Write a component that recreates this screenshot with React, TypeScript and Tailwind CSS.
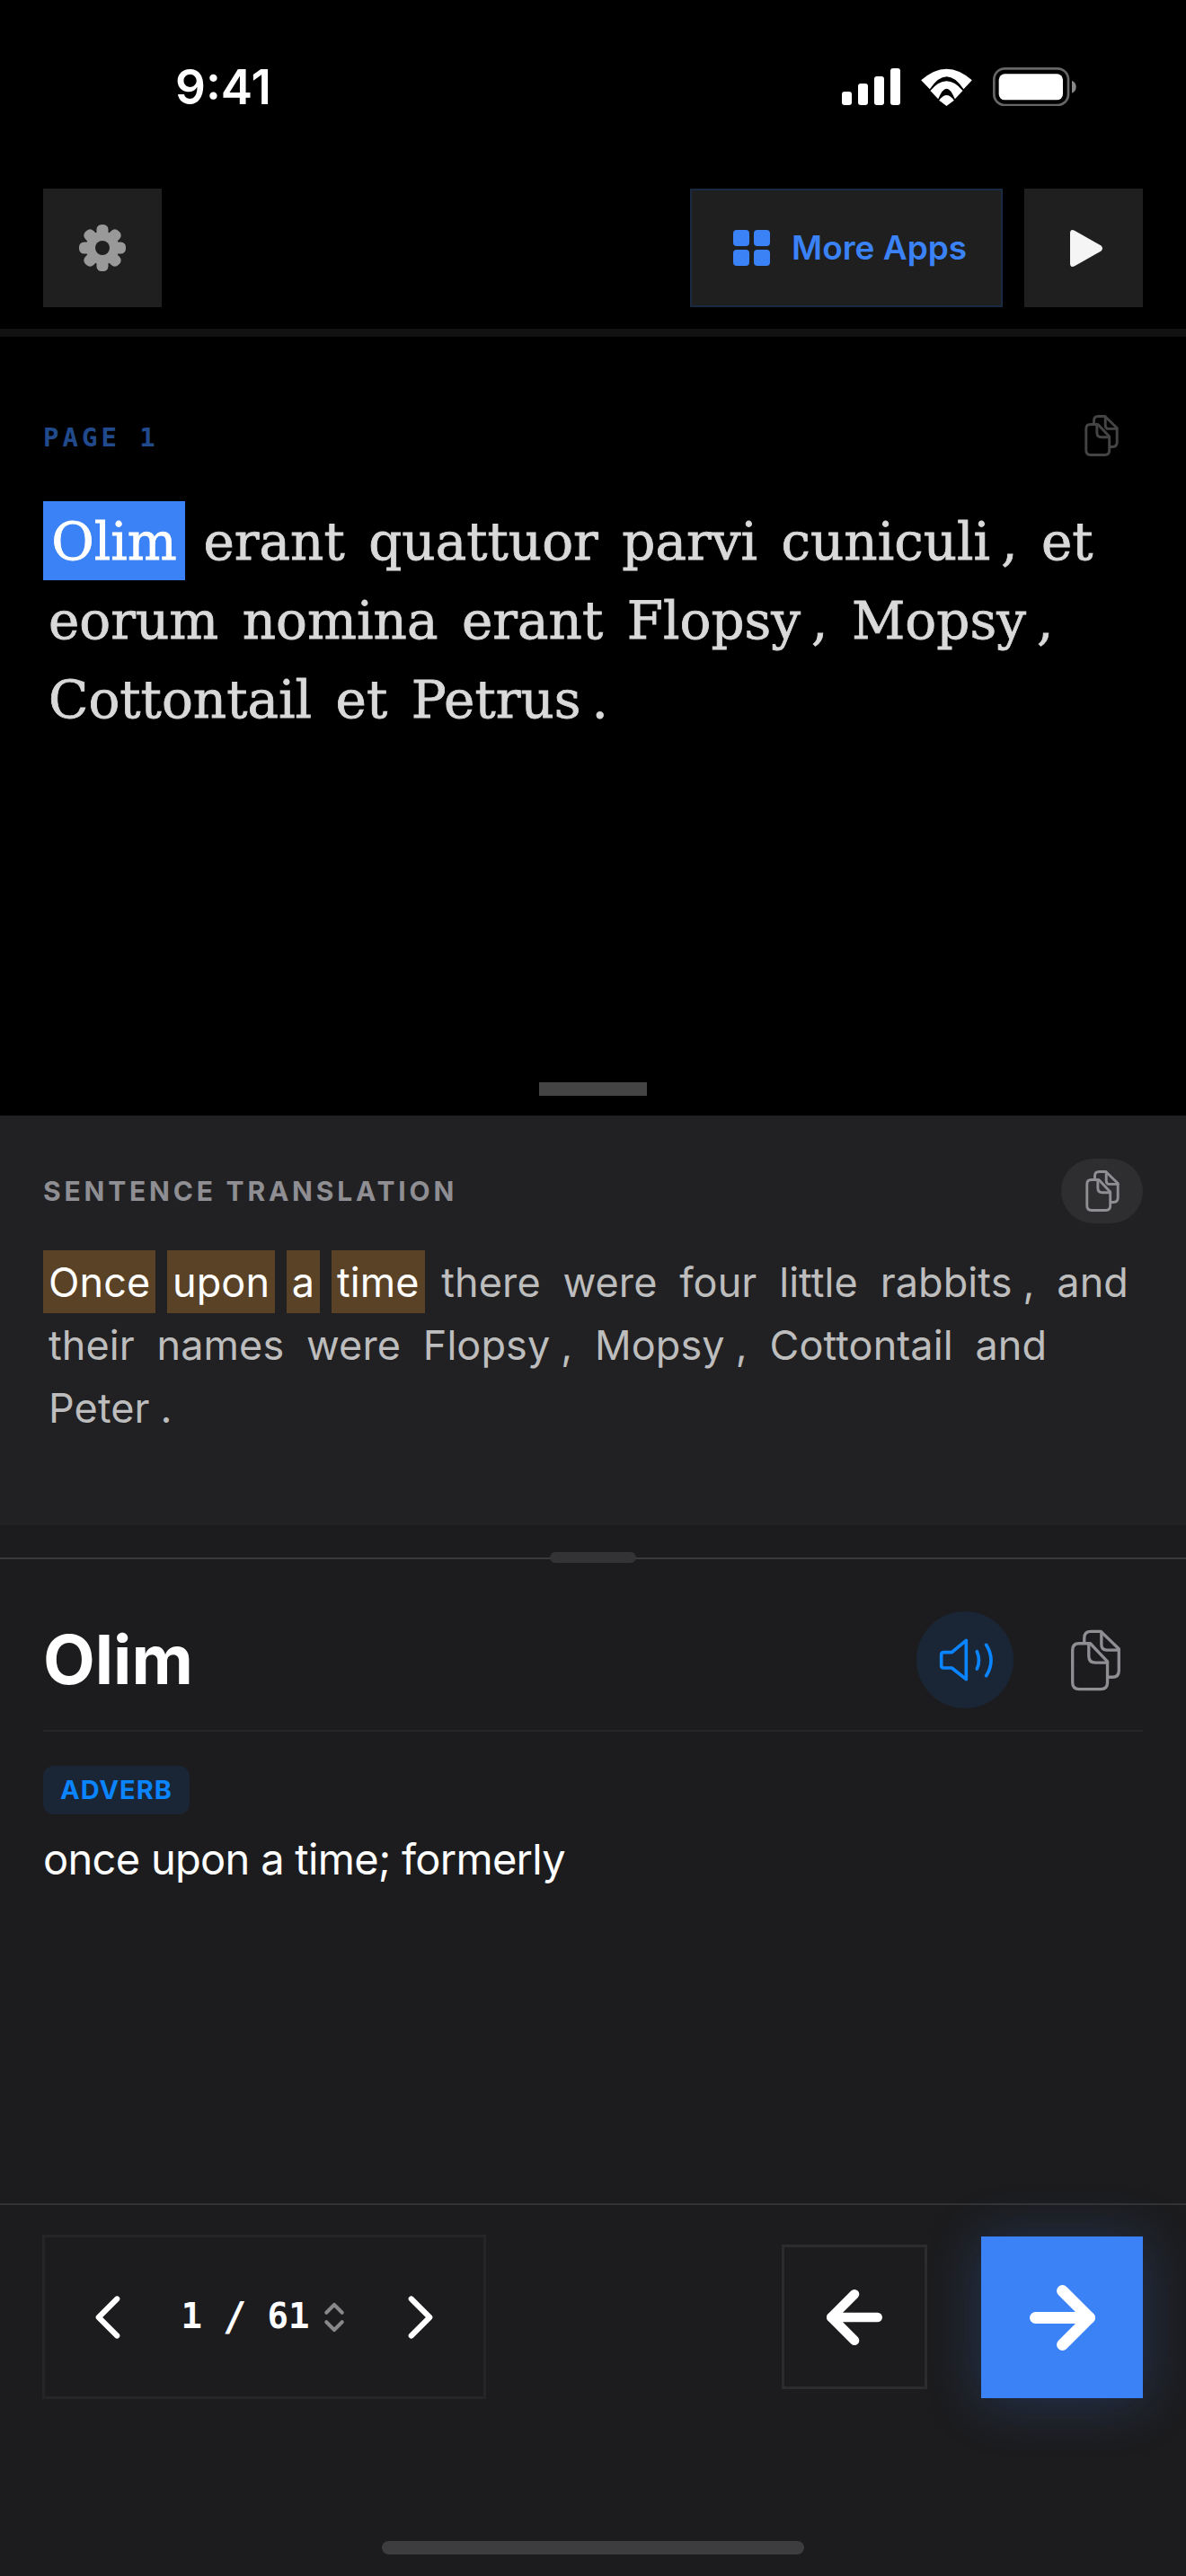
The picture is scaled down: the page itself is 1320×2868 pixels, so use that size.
import { ArrowLeft, ArrowRight, ChevronLeft, ChevronRight, ChevronsUpDown } from "lucide-react";

// ── Icons ──────────────────────────────────────────────────────────

function CopyIcon({ className, strokeWidth = 10 }: { className?: string; strokeWidth?: number }) {
  return (
    <svg className={className} viewBox="628 163 170 206" fill="none" stroke="currentColor" strokeWidth={strokeWidth} strokeLinecap="round" strokeLinejoin="round">
      <path d="M675 208V192Q675 170 697 170H730L790 228V300Q790 322 768 322H755" />
      <path d="M732 172V214Q732 232 750 232H790" />
      <path d="M658 210H695L752 270V340Q752 362 730 362H658Q636 362 636 340V232Q636 210 658 210Z" />
      <path d="M690 212V252Q690 274 712 274H750" />
    </svg>
  );
}

function SignalIcon() {
  return (
    <svg className="w-[65px] h-[41px]" viewBox="0 0 65 41" fill="#fff">
      <rect x="0" y="26" width="11" height="15" rx="3" />
      <rect x="18" y="17" width="11" height="24" rx="3" />
      <rect x="36" y="9" width="11" height="32" rx="3" />
      <rect x="54" y="0" width="11" height="41" rx="3" />
    </svg>
  );
}

function WifiIcon() {
  return (
    <svg className="w-[57px] h-[42px]" viewBox="435 75 170 126" fill="#fff">
      <path d="M435 115Q520 39 605 115L577 145Q520 61 464 145Z" />
      <path d="M466 150Q520 86 574 150L548 178Q520 108 492 178Z" />
      <path d="M495 182Q520 148 545 182L520 201Z" />
    </svg>
  );
}

function BatteryIcon() {
  return (
    <svg className="w-[93px] h-[43px]" viewBox="676 74 279 129">
      <rect x="680" y="78" width="248" height="122" rx="36" fill="none" stroke="#666" strokeWidth="8" />
      <rect x="696" y="96" width="214" height="87" rx="20" fill="#fff" />
      <path d="M940 118Q954 124 954 139Q954 154 940 160Z" fill="#888" />
    </svg>
  );
}

function GearIcon() {
  return (
    <svg className="w-[52px] h-[52px]" viewBox="0 0 52 52" fill="#999999">
      <circle cx="26" cy="26" r="18.500" />
      {[0, 45, 90, 135, 180, 225, 270, 315].map((deg) => (
        <rect key={deg} x="19.500" y="0" width="13" height="14" rx="5.500" transform={`rotate(${deg} 26 26)`} />
      ))}
      <circle cx="26" cy="26" r="8" fill="#1f1f1f" />
    </svg>
  );
}

function GridIcon() {
  return (
    <svg className="w-[41px] h-[40px]" viewBox="0 0 41 40" fill="#3b82f6">
      <rect x="0" y="0" width="18" height="18" rx="4" />
      <rect x="23" y="0" width="18" height="18" rx="4" />
      <rect x="0" y="22" width="18" height="18" rx="4" />
      <rect x="23" y="22" width="18" height="18" rx="4" />
    </svg>
  );
}

function PlayIcon() {
  return (
    <svg className="w-[37px] h-[41px]" viewBox="0 0 37 41" fill="#f5f5f5">
      <path d="M0 4Q0 -1.500 5 0.800L34.500 17.500Q37.500 20.500 34.500 23.500L5 40.200Q0 42.500 0 37Z" />
    </svg>
  );
}

function SpeakerIcon() {
  return (
    <svg className="w-[64px] h-[50px] ml-[3px]" viewBox="190 190 190 150" fill="none" stroke="#0a84ff" strokeWidth="11" strokeLinecap="round" strokeLinejoin="round">
      <path d="M208 240H235L283 200V330L235 292H208Q200 292 200 284V248Q200 240 208 240Z" />
      <path d="M319 237Q332 266 319 295" />
      <path d="M350 215Q382 266 350 318" />
    </svg>
  );
}

// ── Text tokens ────────────────────────────────────────────────────

const LATIN = ["Olim", "erant", "quattuor", "parvi", "cuniculi", ",", "et", "eorum", "nomina", "erant", "Flopsy", ",", "Mopsy", ",", "Cottontail", "et", "Petrus", "."];
const ENGLISH = ["Once", "upon", "a", "time", "there", "were", "four", "little", "rabbits", ",", "and", "their", "names", "were", "Flopsy", ",", "Mopsy", ",", "Cottontail", "and", "Peter", "."];

const isPunct = (t: string) => t === "," || t === ".";

export default function App() {
  return (
    <div className="w-[1320px] h-[2868px] flex flex-col bg-black overflow-hidden font-['Inter',sans-serif]">
      {/* Status bar */}
      <div className="h-[210px] shrink-0 flex items-start justify-between pt-[71px] pl-[195px] pr-[122px]">
        <span className="text-[53px] leading-[52px] font-semibold text-white">9:41</span>
        <div className="flex items-center gap-[23px] pt-[4px]">
          <SignalIcon />
          <WifiIcon />
          <BatteryIcon />
        </div>
      </div>

      {/* Toolbar */}
      <div className="h-[132px] shrink-0 flex items-stretch justify-between px-[48px]">
        <button className="w-[132px] flex items-center justify-center bg-[#1f1f1f]">
          <GearIcon />
        </button>
        <div className="flex gap-[24px]">
          <button className="w-[348px] flex items-center gap-[24px] pl-[46px] bg-[#1f1f1f] border-2 border-[#1b2a42]">
            <GridIcon />
            <span className="text-[37px] font-semibold text-[#3b82f6]">More Apps</span>
          </button>
          <button className="w-[132px] flex items-center justify-center bg-[#1f1f1f] pl-[6px]">
            <PlayIcon />
          </button>
        </div>
      </div>
      <div className="h-[9px] mt-[24px] shrink-0 bg-[#111111]" />

      {/* Latin page */}
      <section className="h-[867px] shrink-0 flex flex-col px-[48px]">
        <div className="flex items-center justify-between pt-[87px] h-[133px]">
          <span className="mt-[6px] text-[29px] font-bold tracking-[4px] text-[#214a8c] font-['DejaVu_Sans_Mono',monospace]">PAGE 1</span>
          <CopyIcon className="w-[38px] h-[46px] mr-[27px] text-[#444444]" strokeWidth={13} />
        </div>
        <p className="mt-[50px] text-[58px] leading-[60px] [word-spacing:-4px] text-[#d9d9d9] [-webkit-text-stroke:0.8px] font-['DejaVu_Serif',serif]">
          {LATIN.map((t, i) => (
            <span key={i}>
              {i > 0 && !isPunct(t) ? " " : ""}
              <span className={`inline-block h-[88px] leading-[91px] ${i === 0 ? "w-[158px] text-center bg-[#3b82f6] text-white" : "px-[6px]"}`}>{t}</span>
            </span>
          ))}
        </p>
        <div className="mt-auto mb-[22px] mx-auto w-[120px] h-[15px] bg-[#444444]" />
      </section>

      {/* Sentence translation */}
      <section className="h-[456px] shrink-0 bg-[#212123] px-[48px] pt-[48px]">
        <div className="flex items-center justify-between h-[72px]">
          <span className="text-[30px] font-bold tracking-[3.800px] text-[#8e8e93]">SENTENCE TRANSLATION</span>
          <button className="w-[91px] h-[72px] rounded-full bg-[#2e2e30] flex items-center justify-center">
            <CopyIcon className="w-[38px] h-[46px] text-[#8e8e93]" strokeWidth={13} />
          </button>
        </div>
        <p className="mt-[30px] text-[45px] leading-[50px] tracking-[0.080px] text-[#bdbdbd]">
          {ENGLISH.map((t, i) => (
            <span key={i}>
              {i > 0 && !isPunct(t) ? " " : ""}
              <span className={`inline-block h-[70px] leading-[72px] px-[6px] ${i < 4 ? "bg-[#5a4226] text-white" : ""}`}>{t}</span>
            </span>
          ))}
        </p>
      </section>

      {/* Dictionary */}
      <section className="h-[755px] shrink-0 bg-[#1c1c1e] relative pt-[36px]">
        <div className="h-[2px] bg-[#3a3a3c]" />
        <div className="absolute left-[612px] top-[30px] w-[96px] h-[12px] rounded-[6px] bg-[#333336]" />
        <div className="mx-[48px] h-[192px] pt-[34px] flex items-center justify-between border-b-2 border-[#262628]">
          <span className="text-[75px] leading-[90px] font-bold text-white">Olim</span>
          <div className="flex items-center gap-[63px] pr-[24px]">
            <button className="w-[108px] h-[108px] rounded-full bg-[#1a2636] flex items-center justify-center">
              <SpeakerIcon />
            </button>
            <CopyIcon className="w-[57px] h-[69px] text-[#8e8e93]" />
          </div>
        </div>
        <div className="px-[48px] pt-[38px]">
          <span className="inline-flex items-center h-[54px] px-[19px] rounded-[12px] bg-[#1a2636] text-[29px] font-bold tracking-[1px] text-[#0a84ff]">ADVERB</span>
          <p className="mt-[15px] text-[47px] leading-[70px] tracking-[-0.700px] text-white">once upon a time; formerly</p>
        </div>
      </section>

      {/* Footer */}
      <footer className="flex-1 bg-[#1c1c1e] border-t-2 border-[#333335] relative">
        <div className="flex items-start justify-between pl-[47px] pr-[48px] pt-[33px]">
          <div className="w-[494px] h-[183px] border-[3px] border-[#252527] flex items-center justify-between px-[29px] text-white">
            <ChevronLeft size={82} strokeWidth={1.8} />
            <div className="ml-[7px] flex items-center font-['DejaVu_Sans_Mono',monospace] font-bold text-[39px]">
              <span>1</span>
              <span className="mx-[23px] text-[44px]">/</span>
              <span>61</span>
              <ChevronsUpDown size={42} strokeWidth={2.3} className="text-[#888888] ml-[7px]" />
            </div>
            <ChevronRight size={82} strokeWidth={1.8} />
          </div>
          <div className="flex items-start gap-[60px] pt-[2px]">
            <button className="w-[162px] h-[161px] mt-[9px] border-[3px] border-[#2c2c2e] flex items-center justify-center text-white">
              <ArrowLeft size={88} strokeWidth={2.9} />
            </button>
            <button className="w-[180px] h-[180px] bg-[#3b82f6] flex items-center justify-center text-white shadow-[0_4px_60px_rgba(59,130,246,0.25)]">
              <ArrowRight size={103} strokeWidth={3} />
            </button>
          </div>
        </div>
        <div className="absolute left-[425px] bottom-[24px] w-[470px] h-[15px] rounded-[8px] bg-[#3d3d3f]" />
      </footer>
    </div>
  );
}
